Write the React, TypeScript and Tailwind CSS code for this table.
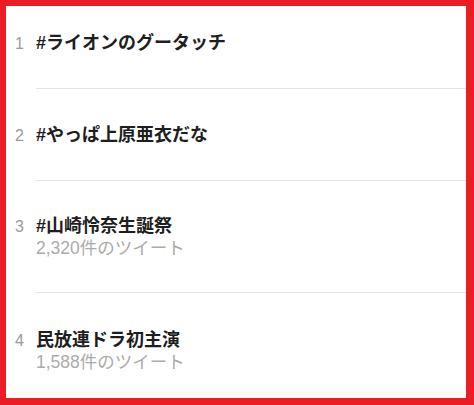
const trends = [
  { rank: 1, name: "#ライオンのグータッチ", pt: "pt-[26px]", pb: "pb-[34px]" },
  { rank: 2, name: "#やっぱ上原亜衣だな", pt: "pt-[35px]", pb: "pb-[34px]" },
  { rank: 3, name: "#山崎怜奈生誕祭", count: "2,320", pt: "pt-[34px]", pb: "pb-[33px]" },
  { rank: 4, name: "民放連ドラ初主演", count: "1,588", pt: "pt-[36px]", pb: "pb-[24px]", last: true },
];

export default function App() {
  return (
    <div
      className="w-[474px] h-[405px] bg-white border-[#ec1c24] border-l-[6px] border-t-[6px] border-r-[8px] border-b-[7px] overflow-hidden"
      style={{ fontFamily: '"Liberation Sans", "Noto Sans CJK JP", sans-serif' }}
    >
      {trends.map((t) => (
        <div key={t.rank} className="flex">
          <div className={`w-[30px] pl-[9px] shrink-0 ${t.pt}`}>
            <span className="text-[16px] leading-[22px] text-[#9b9b9b]">{t.rank}</span>
          </div>
          <div
            className={`flex-1 ${t.pt} ${t.pb} ${t.last ? "" : "border-b border-[#e5e5e5]"}`}
          >
            <p className="text-[18px] leading-[22px] font-bold text-[#1e1e1e]">{t.name}</p>
            {t.count && (
              <p className="text-[17.5px] leading-[22px] text-[#ababab]">
                {t.count}件のツイート
              </p>
            )}
          </div>
        </div>
      ))}
    </div>
  );
}
